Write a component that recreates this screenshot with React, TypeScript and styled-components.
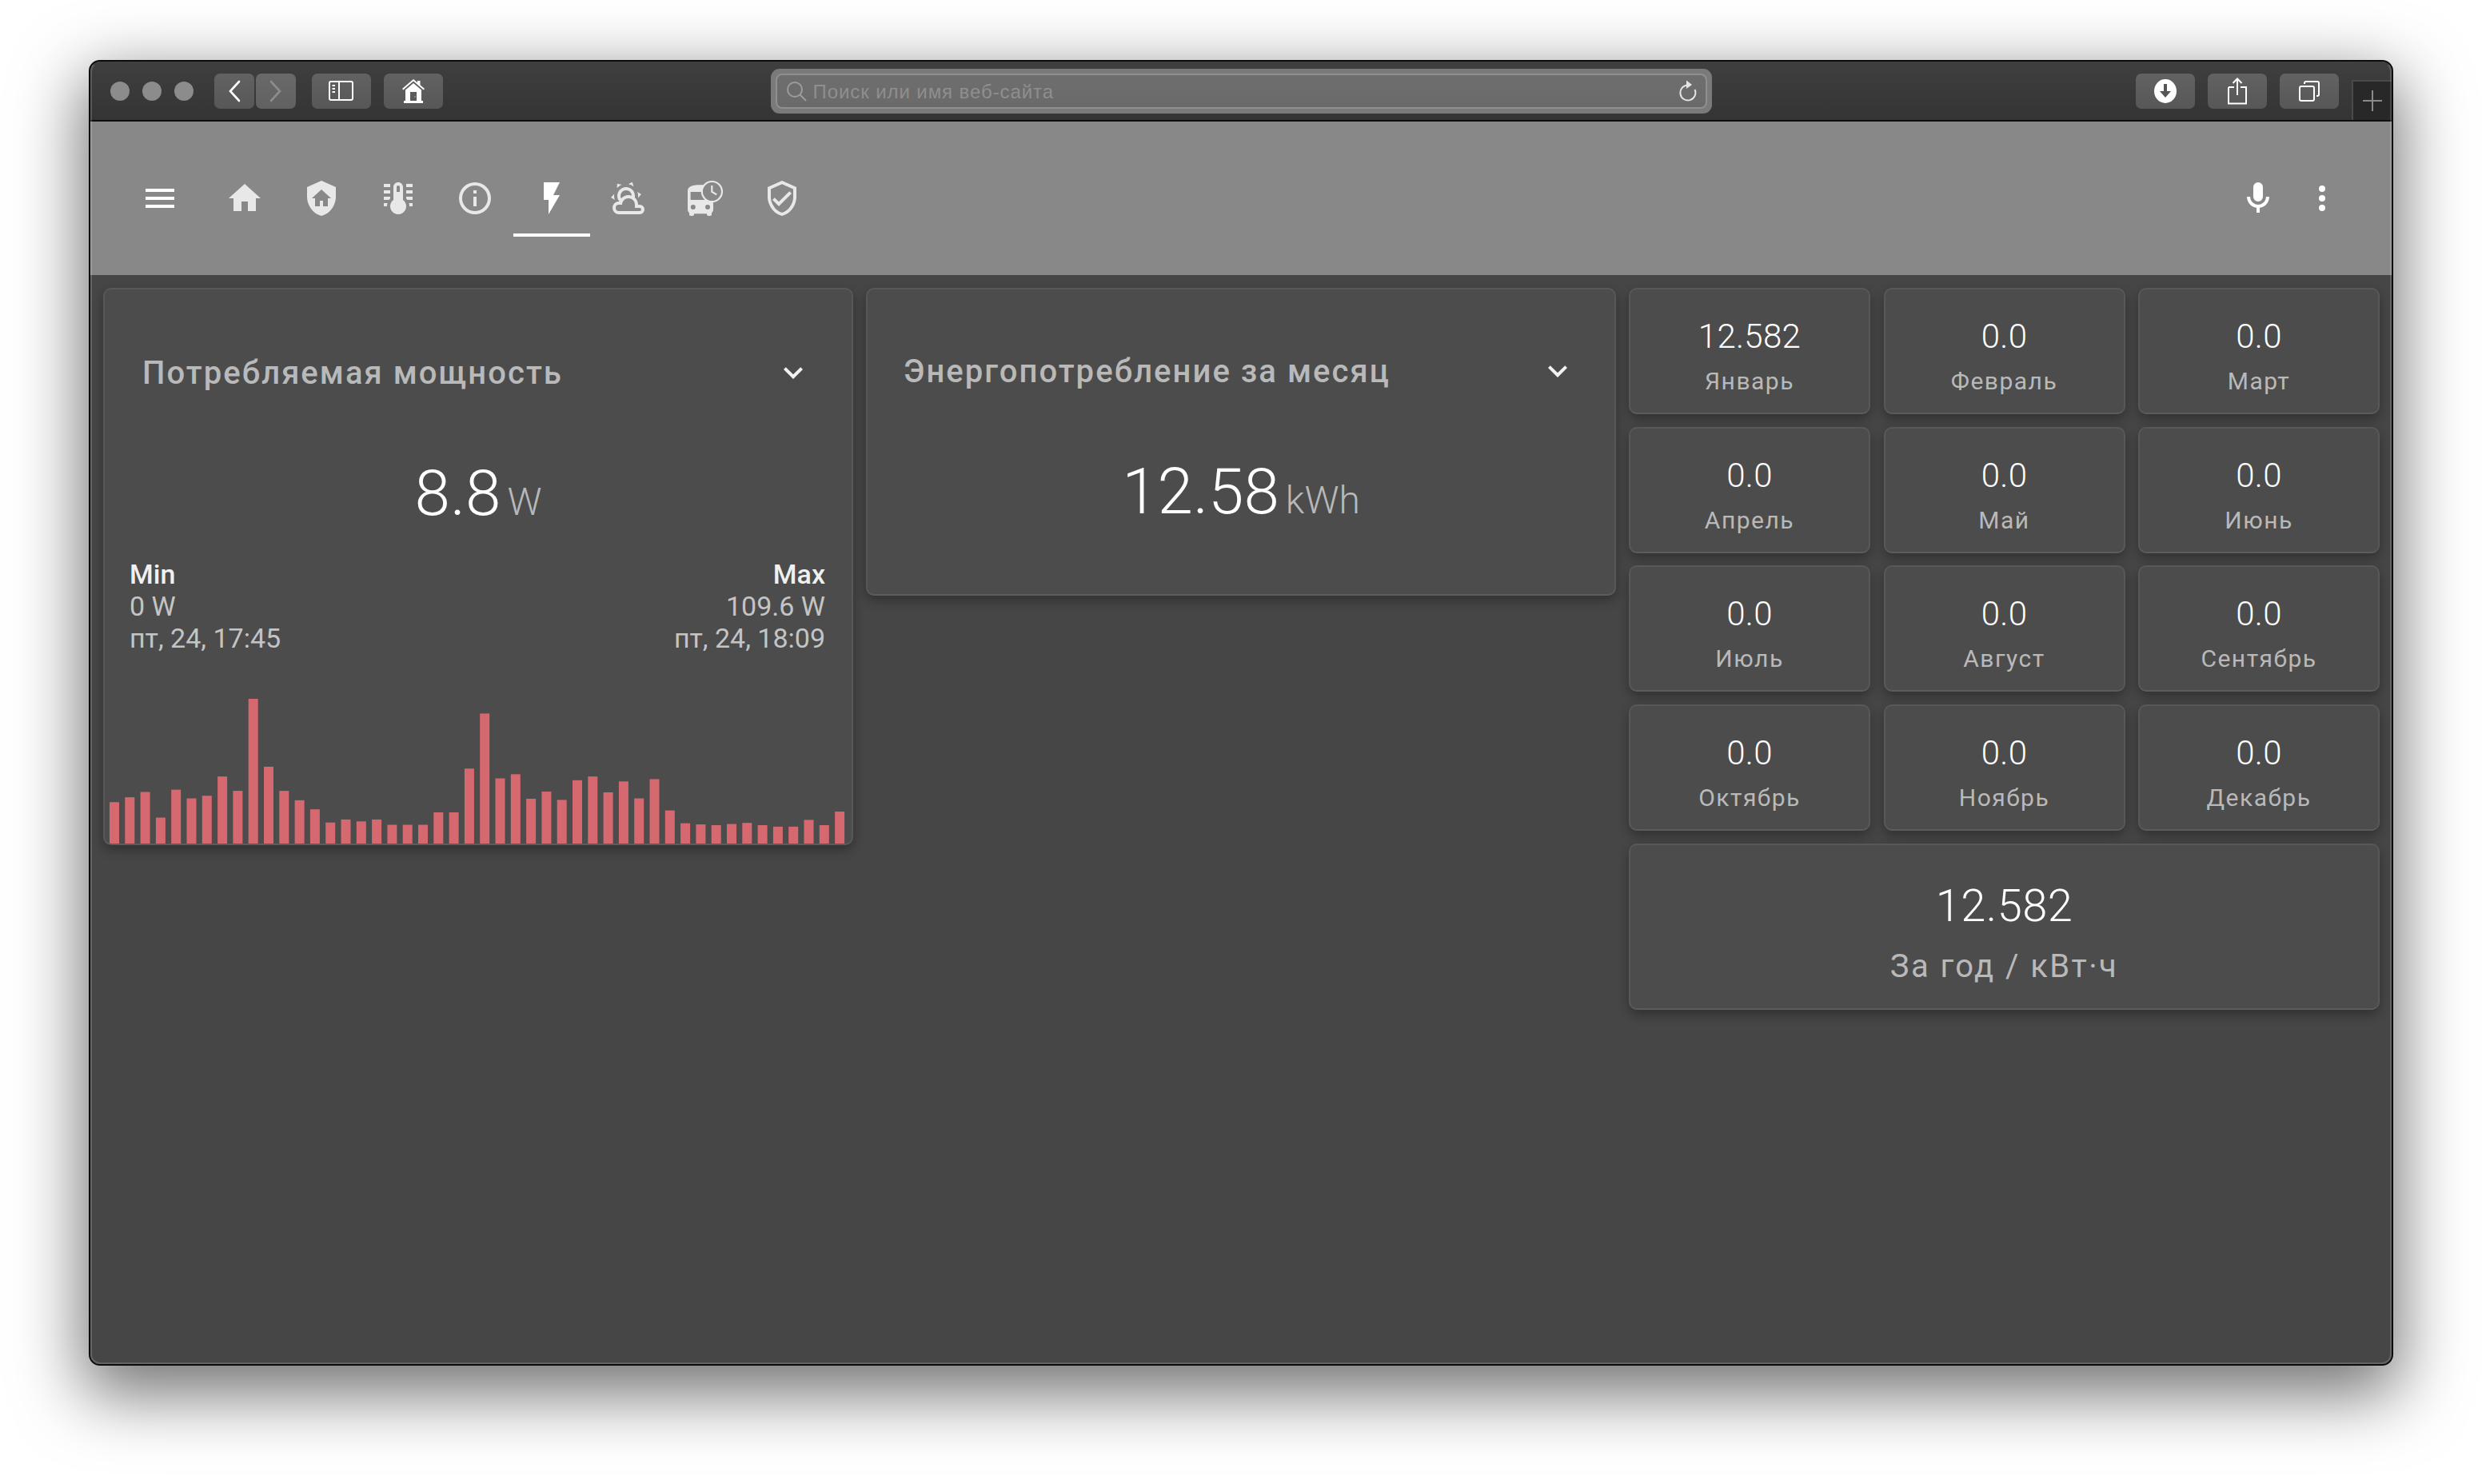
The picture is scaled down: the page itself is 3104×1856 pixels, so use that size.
import React from "react";
import styled, { createGlobalStyle } from "styled-components";

const Global = createGlobalStyle`
  html, body { margin: 0; padding: 0; background: #fff; }
  * { box-sizing: border-box; }
  body { font-family: Roboto, "Noto Sans", sans-serif; }
`;

const Stage = styled.div`
  width: 3104px;
  height: 1856px;
  padding: 75px 111px;
  background: #fff;
  overflow: hidden;
`;

const Window = styled.div`
  position: relative;
  width: 2882px;
  height: 1633px;
  display: flex;
  flex-direction: column;
  border: 2px solid #0c0c0c;
  border-radius: 14px;
  overflow: hidden;
  background: #464646;
  box-shadow: 0 28px 84px 8px rgba(0, 0, 0, 0.55);
  &::after {
    content: "";
    position: absolute;
    inset: 0;
    border: 2px solid rgba(255, 255, 255, 0.16);
    border-top-color: transparent;
    border-radius: 12px;
    pointer-events: none;
  }
`;

const TitleBar = styled.div`
  flex: none;
  height: 75px;
  display: grid;
  grid-template-columns: 1fr 1177px 1fr;
  align-items: center;
  background: linear-gradient(#3f3f3f, #343434);
  border-bottom: 2px solid #0e0e0e;
`;

const TitleLeft = styled.div`
  display: flex;
  align-items: center;
  padding-left: 25px;
`;

const TitleRight = styled.div`
  height: 100%;
  display: flex;
  align-items: center;
  justify-content: flex-end;
`;

const Lights = styled.div`
  display: flex;
  gap: 16px;
  margin-right: 26px;
`;

const Light = styled.span`
  width: 24px;
  height: 24px;
  border-radius: 50%;
  background: #8c8c8c;
`;

const ToolButton = styled.div<{ $w: number; $gap?: number; $dim?: boolean }>`
  width: ${(p) => p.$w}px;
  height: 44px;
  margin-right: ${(p) => p.$gap ?? 0}px;
  display: flex;
  align-items: center;
  justify-content: center;
  border-radius: 7px;
  background: ${(p) => (p.$dim ? "linear-gradient(#696969, #616161)" : "linear-gradient(#626262, #575757)")};
  color: ${(p) => (p.$dim ? "#8c8c8c" : "#fff")};
`;

const AddressOuter = styled.div`
  height: 56px;
  padding: 6px;
  border-radius: 11px;
  background: #7a7a7a;
`;

const AddressInner = styled.div`
  height: 44px;
  display: flex;
  align-items: center;
  padding: 0 11px 0 11px;
  border: 2px solid #8f8f8f;
  border-radius: 8px;
  background: linear-gradient(#6e6e6e, #6a6a6a);
`;

const AddressText = styled.span`
  flex: 1;
  margin-left: 8px;
  padding-top: 2px;
  font-family: "Liberation Sans", Arial, sans-serif;
  font-size: 24px;
  letter-spacing: 0.92px;
  color: #8f8f8f;
  white-space: nowrap;
`;

const NewTab = styled.div`
  align-self: flex-end;
  width: 50px;
  height: 50px;
  margin-left: 16px;
  display: flex;
  align-items: center;
  justify-content: center;
  background: #282828;
  border-left: 2px solid #4a4a4a;
  border-top: 2px solid #4a4a4a;
  color: #8a8a8a;
`;

const Header = styled.div`
  flex: none;
  height: 192px;
  display: flex;
  align-items: center;
  padding: 0 63px;
  background: #888888;
`;

const HeaderIcon = styled.div<{ $active?: boolean }>`
  width: 48px;
  height: 48px;
  flex: none;
  color: ${(p) => (p.$active ? "#ffffff" : "#e8e8e8")};
  svg { display: block; width: 48px; height: 48px; fill: currentColor; }
`;

const Tabs = styled.div`
  display: flex;
  flex: 1;
  margin-left: 34px;
`;

const Tab = styled.div<{ $active?: boolean }>`
  width: 96px;
  height: 96px;
  display: flex;
  align-items: center;
  justify-content: center;
  border-bottom: 4px solid ${(p) => (p.$active ? "#fff" : "transparent")};
  padding-top: 4px;
`;

const HeaderActions = styled.div`
  display: flex;
  gap: 32px;
  color: #fff;
`;

const Body = styled.div`
  flex: 1;
  display: grid;
  grid-template-columns: 938px 938px 939px;
  gap: 16px;
  align-items: start;
  padding: 16px;
  background: #464646;
`;

const Card = styled.div`
  position: relative;
  overflow: hidden;
  background: #4c4c4c;
  border: 2px solid #585858;
  border-bottom-color: #5c5c5c;
  border-radius: 10px;
  box-shadow: 0 6px 14px rgba(0, 0, 0, 0.3);
`;

const GraphCard = styled(Card)`
  height: 697px;
  padding-top: 78px;
`;

const MonthCard = styled(Card)`
  height: 385px;
  padding-top: 76px;
`;

const CardHeader = styled.div<{ $right: number; $left: number }>`
  display: flex;
  align-items: center;
  justify-content: space-between;
  height: 52px;
  padding: 0 ${(p) => p.$right}px 0 ${(p) => p.$left}px;
`;

const CardTitle = styled.div`
  font-size: 40px;
  font-weight: 460;
  letter-spacing: 2.05px;
  color: #b9b9b9;
  white-space: nowrap;
`;

const Chevron = styled.svg`
  width: 48px;
  height: 48px;
  fill: #f2f2f2;
`;

const Reading = styled.div`
  display: flex;
  align-items: baseline;
  justify-content: center;
  gap: 8px;
  margin-top: 85px;
  height: 80px;
  line-height: 80px;
`;

const ReadingValue = styled.span`
  font-size: 80px;
  font-weight: 280;
  color: #fff;
`;

const ReadingUnit = styled.span`
  font-size: 48px;
  font-weight: 290;
  color: #b8b8b8;
`;

const Extremes = styled.div`
  display: flex;
  justify-content: space-between;
  margin-top: 41px;
  padding: 0 33px 0 31px;
  font-size: 34px;
  font-weight: 380;
  line-height: 40px;
  color: #c4c4c4;
`;

const Extreme = styled.div<{ $right?: boolean }>`
  text-align: ${(p) => (p.$right ? "right" : "left")};
`;

const ExtremeLabel = styled.div`
  font-weight: 500;
  color: #f0f0f0;
`;

const Chart = styled.svg`
  display: block;
  margin: 56px 0 0 6px;
  width: 922px;
  height: 183px;
`;

const MonthGrid = styled.div`
  display: grid;
  grid-template-columns: repeat(3, 1fr);
  grid-auto-rows: 158px;
  column-gap: 16.5px;
  row-gap: 15.67px;
`;

const Tile = styled(Card)`
  display: flex;
  flex-direction: column;
  align-items: center;
  padding-top: 34px;
`;

const TotalTile = styled(Card)`
  grid-column: 1 / -1;
  height: 208px;
  display: flex;
  flex-direction: column;
  align-items: center;
  padding-top: 46px;
`;

const TileValue = styled.div`
  font-size: 42px;
  font-weight: 360;
  line-height: 50px;
  letter-spacing: 0.3px;
  color: #fff;
`;

const TileLabel = styled.div`
  margin-top: 11px;
  font-size: 30px;
  line-height: 40px;
  letter-spacing: 1.5px;
  color: #b9b9b9;
`;

const TotalValue = styled.div`
  font-size: 56px;
  font-weight: 360;
  line-height: 60px;
  letter-spacing: 0.5px;
  color: #fff;
`;

const TotalLabel = styled.div`
  margin-top: 24px;
  font-size: 40px;
  line-height: 44px;
  letter-spacing: 2.4px;
  color: #b9b9b9;
`;

const P = {
  menu: "M3,6H21V8H3V6M3,11H21V13H3V11M3,16H21V18H3V16Z",
  home: "M10,20V14H14V20H19V12H22L12,3L2,12H5V20H10Z",
  therm:
    "M17 3H21V5H17V3M17 7H21V9H17V7M17 11H21V13H17.75L17 12.1V11M21 15V17H19C19 16.31 18.9 15.63 18.71 15H21M7 3V5H3V3H7M7 7V9H3V7H7M7 11V12.1L6.25 13H3V11H7M3 15H5.29C5.1 15.63 5 16.31 5 17H3V15M15 13V5C15 3.34 13.66 2 12 2S9 3.34 9 5V13C6.79 14.66 6.34 17.79 8 20S12.79 22.66 15 21 17.66 16.21 16 14C15.72 13.62 15.38 13.28 15 13M12 4C12.55 4 13 4.45 13 5V8H11V5C11 4.45 11.45 4 12 4Z",
  info: "M11,9H13V7H11M12,20C7.59,20 4,16.41 4,12C4,7.59 7.59,4 12,4C16.41,4 20,7.59 20,12C20,16.41 16.41,20 12,20M12,2A10,10 0 0,0 2,12A10,10 0 0,0 12,22A10,10 0 0,0 22,12A10,10 0 0,0 12,2M11,17H13V11H11V17Z",
  flash: "M7,2V13H10V22L17,10H13L17,2H7Z",
  weather:
    "M12.74,5.47C15.1,6.5 16.35,9.03 15.92,11.46C17.19,12.56 18,14.19 18,16V16.17C18.31,16.06 18.65,16 19,16A3,3 0 0,1 22,19A3,3 0 0,1 19,22H6A4,4 0 0,1 2,18A4,4 0 0,1 6,14H6.27C5,12.45 4.6,10.24 5.5,8.26C6.72,5.5 9.97,4.24 12.74,5.47M11.93,7.3C10.16,6.5 8.09,7.31 7.31,9.07C6.85,10.09 6.93,11.22 7.41,12.13C8.5,10.83 10.16,10 12,10C12.7,10 13.38,10.12 14,10.34C13.94,9.06 13.18,7.86 11.93,7.3M13.55,3.64C13,3.4 12.45,3.23 11.88,3.12L14.37,1.82L15.27,4.71C14.76,4.3 14.19,3.93 13.55,3.64M6.09,4.44C5.6,4.79 5.17,5.19 4.8,5.63L4.91,2.82L7.87,3.5C7.25,3.71 6.65,4.03 6.09,4.44M18,9.71C17.91,9.12 17.78,8.55 17.59,8L19.97,9.5L17.92,11.73C18.03,11.08 18.05,10.4 18,9.71M3.04,11.3C3.11,11.9 3.24,12.46 3.43,13L1.06,11.5L3.1,9.28C3,9.93 2.97,10.61 3.04,11.3M19,18H16V16A4,4 0 0,0 12,12A4,4 0 0,0 8,16H6A2,2 0 0,0 4,18A2,2 0 0,0 6,20H19A1,1 0 0,0 20,19A1,1 0 0,0 19,18Z",
  shieldCheck:
    "M21,11C21,16.55 17.16,21.74 12,23C6.84,21.74 3,16.55 3,11V5L12,1L21,5V11M12,21C15.75,20 19,15.54 19,11.22V6.3L12,3.18L5,6.3V11.22C5,15.54 8.25,20 12,21M10,17L6,13L7.41,11.59L10,14.17L16.59,7.58L18,9L10,17Z",
  mic: "M12,2A3,3 0 0,1 15,5V11A3,3 0 0,1 12,14A3,3 0 0,1 9,11V5A3,3 0 0,1 12,2M19,11C19,14.53 16.39,17.44 13,17.93V21H11V17.93C7.61,17.44 5,14.53 5,11H7A5,5 0 0,0 12,16A5,5 0 0,0 17,11H19Z",
  dots: "M12,16A2,2 0 0,1 14,18A2,2 0 0,1 12,20A2,2 0 0,1 10,18A2,2 0 0,1 12,16M12,10A2,2 0 0,1 14,12A2,2 0 0,1 12,14A2,2 0 0,1 10,12A2,2 0 0,1 12,10M12,4A2,2 0 0,1 14,6A2,2 0 0,1 12,8A2,2 0 0,1 10,6A2,2 0 0,1 12,4Z",
  chevron: "M7.41,8.58L12,13.17L16.59,8.58L18,10L12,16L6,10L7.41,8.58Z",
};

const Mdi = ({ d }: { d: string }) => (
  <svg viewBox="0 0 24 24">
    <path d={d} />
  </svg>
);

const ShieldHome = () => (
  <svg viewBox="0 0 24 24">
    <path
      fillRule="evenodd"
      d="M12 1L3 5V11C3 16.55 6.84 21.74 12 23C17.16 21.74 21 16.55 21 11V5L12 1ZM12 6.5L18 12H16V17H13V13.5H11V17H8V12H6L12 6.5Z"
    />
  </svg>
);

const BusClock = () => (
  <svg viewBox="0 0 24 24">
    <path
      fillRule="evenodd"
      d="M1 7.2C1 4.5 4.5 3.6 9 3.6C13.5 3.6 17 4.5 17 7.2V19C17 19.9 16.6 20.6 16 21.1V22C16 22.6 15.6 23 15 23H14C13.4 23 13 22.6 13 22V21.6H5V22C5 22.6 4.6 23 4 23H3C2.4 23 2 22.6 2 22V21.1C1.4 20.6 1 19.9 1 19V7.2ZM2.8 8V13H15V8H2.8ZM4.4 16A1.5 1.5 0 1 0 4.4 19A1.5 1.5 0 1 0 4.4 16ZM13.5 16A1.5 1.5 0 1 0 13.5 19A1.5 1.5 0 1 0 13.5 16Z"
    />
    <circle cx="16.2" cy="7.8" r="6.3" fill="#888888" stroke="currentColor" strokeWidth="1.1" />
    <path d="M15.6 4H16.7V7.6L19.4 9.2L18.8 10.1L15.6 8.2V4Z" />
  </svg>
);

const Line = styled.svg`
  display: block;
  fill: none;
  stroke: currentColor;
  stroke-width: 2;
`;

const BackIcon = () => (
  <Line width="16" height="28" viewBox="0 0 16 28" strokeLinecap="round">
    <path d="M14 2L3 14L14 26" strokeWidth="2.6" />
  </Line>
);
const ForwardIcon = () => (
  <Line width="16" height="28" viewBox="0 0 16 28" strokeLinecap="round">
    <path d="M2 2L13 14L2 26" strokeWidth="2.6" />
  </Line>
);
const SidebarIcon = () => (
  <Line width="32" height="26" viewBox="0 0 32 26">
    <rect x="1" y="1" width="29" height="23" rx="2" />
    <path d="M13 1V24" />
    <path d="M4.5 6H8M4.5 10H8M4.5 14H8" strokeWidth="1.8" />
  </Line>
);
const HouseIcon = () => (
  <svg width="28" height="30" viewBox="0 0 28 30" fill="#fff">
    <path fillRule="evenodd" d="M14 0L19 4.3V2H22.5V7.3L28 12L26.7 13.5L14 2.6L1.3 13.5L0 12L14 0Z" />
    <path
      fillRule="evenodd"
      d="M14 5L24 13.6V27H26V30H2V27H4V13.6L14 5ZM10 16V27H18V16H10ZM15.5 21.5H16.5V22.5H15.5V21.5Z"
    />
  </svg>
);
const DownloadIcon = () => (
  <svg width="28" height="30" viewBox="0 0 28 30">
    <ellipse cx="14" cy="15" rx="14" ry="15" fill="#fff" />
    <path d="M12 6H16V15H21L14 23L7 15H12V6Z" fill="#555" />
  </svg>
);
const ShareIcon = () => (
  <Line width="24" height="34" viewBox="0 0 24 34">
    <path d="M1 12H8M16 12H23V32.5H1V12" />
    <path d="M12 22V2M6.5 7L12 1.5L17.5 7" />
  </Line>
);
const TabsIcon = () => (
  <Line width="26" height="26" viewBox="0 0 26 26">
    <rect x="1" y="7" width="18" height="18" rx="2" />
    <path d="M7 4V3C7 2 8 1 9 1H23C24 1 25 2 25 3V17C25 18 24 19 23 19H22" />
  </Line>
);
const SearchIcon = () => (
  <Line width="26" height="26" viewBox="0 0 26 26" style={{ color: "#9c9c9c" }}>
    <circle cx="11" cy="11" r="9" />
    <path d="M17.5 17.5L25 25" />
  </Line>
);
const ReloadIcon = () => (
  <Line width="24" height="28" viewBox="0 0 24 28" style={{ color: "#e4e4e4" }}>
    <path d="M13 6.5A9.5 9.5 0 1 0 21.5 12" />
    <path d="M11 0.5L18 6L11 11Z" fill="currentColor" stroke="none" />
  </Line>
);
const PlusIcon = () => (
  <Line width="24" height="26" viewBox="0 0 24 26">
    <path d="M12 0V26M0 13H24" />
  </Line>
);

const BAR_TOPS = [
  1403, 1390, 1376, 1444, 1370, 1393, 1386, 1335, 1373, 1128, 1309, 1373, 1398, 1422, 1457, 1449,
  1454, 1449, 1463, 1463, 1463, 1430, 1430, 1314, 1168, 1340, 1329, 1394, 1375, 1397, 1345, 1335,
  1377, 1348, 1393, 1342, 1425, 1459, 1462, 1464, 1461, 1458, 1464, 1468, 1468, 1450, 1464, 1428,
];

const BarChart = () => (
  <Chart viewBox="0 0 922 183">
    {BAR_TOPS.map((t, i) => {
      const h = (1517 - t) / 2.12;
      return <rect key={i} x={i * 19.3} y={183 - h} width={12} height={h} fill="#d6686f" />;
    })}
  </Chart>
);

const MONTHS: [string, string][] = [
  ["12.582", "Январь"],
  ["0.0", "Февраль"],
  ["0.0", "Март"],
  ["0.0", "Апрель"],
  ["0.0", "Май"],
  ["0.0", "Июнь"],
  ["0.0", "Июль"],
  ["0.0", "Август"],
  ["0.0", "Сентябрь"],
  ["0.0", "Октябрь"],
  ["0.0", "Ноябрь"],
  ["0.0", "Декабрь"],
];

export default function App() {
  return (
    <>
      <Global />
      <Stage>
        <Window>
          <TitleBar>
            <TitleLeft>
              <Lights>
                <Light />
                <Light />
                <Light />
              </Lights>
              <ToolButton $w={50} $gap={2}>
                <BackIcon />
              </ToolButton>
              <ToolButton $w={50} $gap={20} $dim>
                <ForwardIcon />
              </ToolButton>
              <ToolButton $w={74} $gap={16}>
                <SidebarIcon />
              </ToolButton>
              <ToolButton $w={74}>
                <HouseIcon />
              </ToolButton>
            </TitleLeft>
            <AddressOuter>
              <AddressInner>
                <SearchIcon />
                <AddressText>Поиск или имя веб-сайта</AddressText>
                <ReloadIcon />
              </AddressInner>
            </AddressOuter>
            <TitleRight>
              <ToolButton $w={74} $gap={16}>
                <DownloadIcon />
              </ToolButton>
              <ToolButton $w={74} $gap={16}>
                <ShareIcon />
              </ToolButton>
              <ToolButton $w={74}>
                <TabsIcon />
              </ToolButton>
              <NewTab>
                <PlusIcon />
              </NewTab>
            </TitleRight>
          </TitleBar>
          <Header>
            <HeaderIcon $active>
              <Mdi d={P.menu} />
            </HeaderIcon>
            <Tabs>
              <Tab>
                <HeaderIcon>
                  <Mdi d={P.home} />
                </HeaderIcon>
              </Tab>
              <Tab>
                <HeaderIcon>
                  <ShieldHome />
                </HeaderIcon>
              </Tab>
              <Tab>
                <HeaderIcon>
                  <Mdi d={P.therm} />
                </HeaderIcon>
              </Tab>
              <Tab>
                <HeaderIcon>
                  <Mdi d={P.info} />
                </HeaderIcon>
              </Tab>
              <Tab $active>
                <HeaderIcon $active>
                  <Mdi d={P.flash} />
                </HeaderIcon>
              </Tab>
              <Tab>
                <HeaderIcon>
                  <Mdi d={P.weather} />
                </HeaderIcon>
              </Tab>
              <Tab>
                <HeaderIcon>
                  <BusClock />
                </HeaderIcon>
              </Tab>
              <Tab>
                <HeaderIcon>
                  <Mdi d={P.shieldCheck} />
                </HeaderIcon>
              </Tab>
            </Tabs>
            <HeaderActions>
              <HeaderIcon $active>
                <Mdi d={P.mic} />
              </HeaderIcon>
              <HeaderIcon $active>
                <Mdi d={P.dots} />
              </HeaderIcon>
            </HeaderActions>
          </Header>
          <Body>
            <GraphCard>
              <CardHeader $left={47} $right={49}>
                <CardTitle>Потребляемая мощность</CardTitle>
                <Chevron viewBox="0 0 24 24">
                  <path d={P.chevron} />
                </Chevron>
              </CardHeader>
              <Reading>
                <ReadingValue>8.8</ReadingValue>
                <ReadingUnit>W</ReadingUnit>
              </Reading>
              <Extremes>
                <Extreme>
                  <ExtremeLabel>Min</ExtremeLabel>
                  <div>0 W</div>
                  <div>пт, 24, 17:45</div>
                </Extreme>
                <Extreme $right>
                  <ExtremeLabel>Max</ExtremeLabel>
                  <div>109.6 W</div>
                  <div>пт, 24, 18:09</div>
                </Extreme>
              </Extremes>
              <BarChart />
            </GraphCard>
            <MonthCard>
              <CardHeader $left={45} $right={47}>
                <CardTitle>Энергопотребление за месяц</CardTitle>
                <Chevron viewBox="0 0 24 24">
                  <path d={P.chevron} />
                </Chevron>
              </CardHeader>
              <Reading>
                <ReadingValue>12.58</ReadingValue>
                <ReadingUnit>kWh</ReadingUnit>
              </Reading>
            </MonthCard>
            <MonthGrid>
              {MONTHS.map(([v, l]) => (
                <Tile key={l}>
                  <TileValue>{v}</TileValue>
                  <TileLabel>{l}</TileLabel>
                </Tile>
              ))}
              <TotalTile>
                <TotalValue>12.582</TotalValue>
                <TotalLabel>За год / кВт·ч</TotalLabel>
              </TotalTile>
            </MonthGrid>
          </Body>
        </Window>
      </Stage>
    </>
  );
}
